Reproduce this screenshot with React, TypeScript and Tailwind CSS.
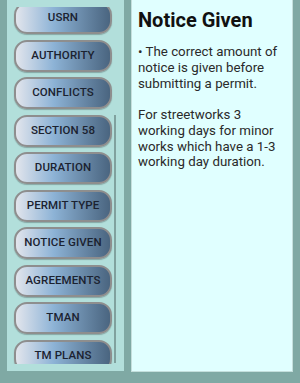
import * as React from 'react';

const topics = [
  'USRN',
  'AUTHORITY',
  'CONFLICTS',
  'SECTION 58',
  'DURATION',
  'PERMIT TYPE',
  'NOTICE GIVEN',
  'AGREEMENTS',
  'TMAN',
  'TM PLANS',
];

function TopicButton({ label }: { label: string }) {
  return (
    <button className="h-[32px] w-[98px] shrink-0 rounded-[13px] border-[2.5px] border-[#8e8e8e] bg-gradient-to-r from-[#e2e5ec] via-[#8db3d6] via-40% to-[#4a6580] text-[11.5px] font-medium tracking-[0.1px] text-[#1b2230] shadow-[0_1px_1px_rgba(0,0,0,0.25)]">
      {label}
    </button>
  );
}

export default function App() {
  return (
    <div className="flex h-[383px] w-[300px] overflow-hidden bg-[#7fa9a4] font-['Roboto',sans-serif]">
      {/* topic list */}
      <div className="relative ml-[7px] h-[371px] w-[117px] bg-[#b2dfdb] py-[7px]">
        <div className="h-full overflow-hidden pl-[7px]">
          <div className="-mt-[5px] flex flex-col gap-[5.5px]">
            {topics.map((t) => (
              <TopicButton key={t} label={t} />
            ))}
          </div>
        </div>
        <div className="absolute left-[107px] top-[115px] h-[248px] w-[2px] bg-[#80a19e]" />
      </div>

      {/* detail panel */}
      <div className="ml-[7px] h-[372px] w-[162px] border-x border-b border-[#c4dfdc] bg-[#e0ffff] pl-[6px] pr-[7px] pt-[8px]">
        <h1 className="text-[20px] font-bold leading-[24px] text-[#111111]">Notice Given</h1>
        <p className="mt-[12px] whitespace-pre-line text-[13.3px] leading-[15.75px] text-[#2a2a2a]">
          {'• The correct amount of notice is given before submitting a permit.\n\nFor streetworks 3 working days for minor works which have a 1-3 working day duration.'}
        </p>
      </div>
    </div>
  );
}
